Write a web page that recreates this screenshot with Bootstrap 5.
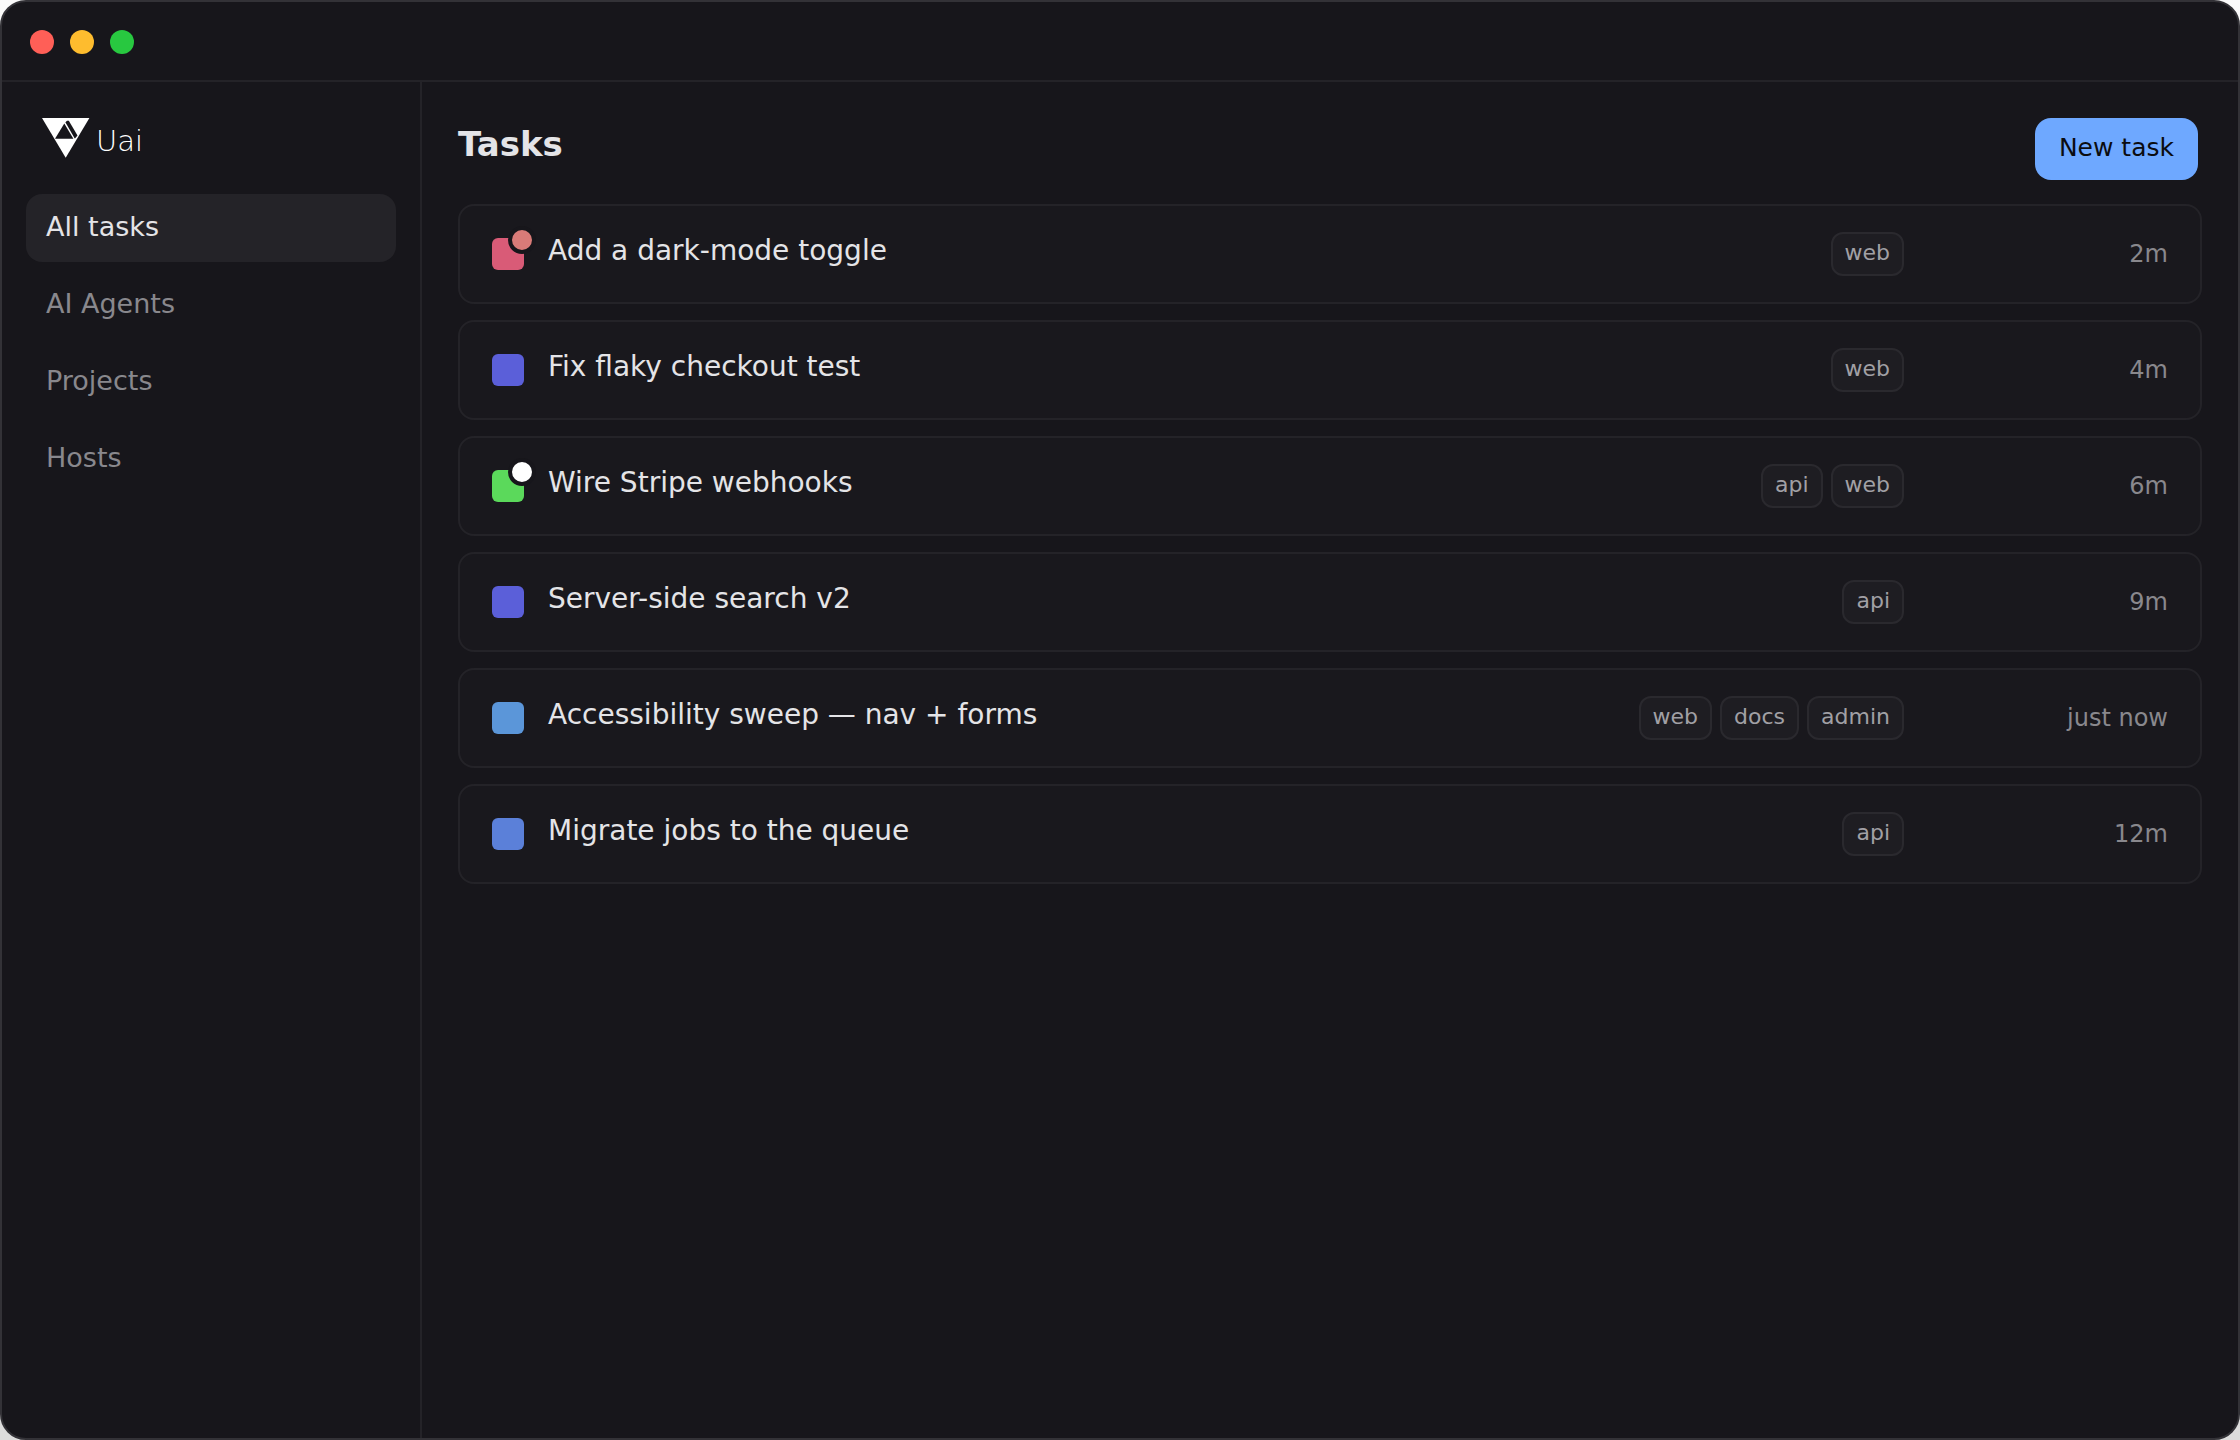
<!DOCTYPE html>
<html lang="en" data-bs-theme="dark">
<head>
<meta charset="utf-8">
<meta name="viewport" content="width=device-width, initial-scale=1">
<title>Uai – Tasks</title>
<link href="https://cdn.jsdelivr.net/npm/bootstrap@5.3.0/dist/css/bootstrap.min.css" rel="stylesheet">
<style>
  :root {
    --surface: #17161b;
    --raised: #19181d;
    --line: #242328;
    --ink: #e4e4e7;
    --muted: #89888d;
  }
  body {
    font-family: "DejaVu Sans", sans-serif;
    color: var(--ink);
    background: linear-gradient(#fafafa, #dcdcdc);
  }
  .app-window { background: var(--surface); border: 2px solid #333237; border-radius: 26px; }
  .title-bar { padding: 28px 28px 26px; gap: 16px; border-bottom: 2px solid var(--line); }
  .light { width: 24px; height: 24px; border-radius: 50%; }
  .light-close { background: #ff5f57; }
  .light-min { background: #febc2e; }
  .light-max { background: #28c840; }

  .side { width: 420px; padding: 36px 24px; border-right: 2px solid var(--line); }
  .brand { padding-left: 16px; gap: 6px; height: 40px; margin-bottom: 36px; color: #fff; }
  .brand-name { font: 200 29px/28px "DejaVu Sans", "DejaVu Sans Light", sans-serif; padding-top: 6px; }
  .side-nav { gap: 9px; }
  .side-nav .nav-link { color: var(--muted); font-size: 27px; line-height: 32px; padding: 17px 20px 19px; border-radius: 16px; }
  .side-nav .nav-link.active { color: var(--ink); background: var(--line); }

  .content { padding: 36px; }
  .content-head { padding-right: 4px; margin-bottom: 24px; }
  .content-head h1 { font-size: 34px; line-height: 40px; color: var(--ink); }
  .btn-new { --bs-btn-bg: #6ea8ff; --bs-btn-color: #0b0c10; --bs-btn-hover-bg: #86b6ff; --bs-btn-hover-color: #0b0c10;
    font-size: 25px; line-height: 32px; padding: 14px 24px 16px; border: 0; border-radius: 16px; }

  .task-list { gap: 16px; }
  .task { min-height: 100px; padding: 0 32px; gap: 24px; background: var(--raised); border: 2px solid var(--line); border-radius: 16px; }
  .swatch { width: 32px; height: 32px; border-radius: 6px; }
  .swatch-rose { background: #d95b77; }
  .swatch-indigo { background: #5b5fd9; }
  .swatch-green { background: #5bd95b; }
  .swatch-sky { background: #5b96d9; }
  .swatch-blue { background: #5b80d9; }
  .dot { position: absolute; top: -12px; right: -12px; width: 28px; height: 28px; border: 4px solid var(--surface); border-radius: 50%; background: #fff; }
  .dot-alert { background: #d97b78; }
  .task-name { font-size: 28px; line-height: 32px; padding-bottom: 6px; }
  .tag { font-size: 22px; line-height: 28px; padding: 5px 12px 7px; color: #a1a0a5; background: #1e1d22; border: 2px solid #2a292e; border-radius: 12px; }
  .age { width: 240px; font-size: 24px; line-height: 32px; color: var(--muted); }
</style>
</head>
<body>
<div class="app-window min-vh-100 d-flex flex-column overflow-hidden">
  <header class="title-bar d-flex">
    <span class="light light-close"></span>
    <span class="light light-min"></span>
    <span class="light light-max"></span>
  </header>
  <div class="d-flex flex-grow-1">
    <aside class="side flex-shrink-0">
      <div class="brand d-flex align-items-center">
        <svg width="48" height="40" viewBox="0 0 48 40" aria-hidden="true">
          <path fill="#fff" d="M0 0H47.4L23.7 39.7Z"/>
          <path fill="#17161b" d="M13 20.8 22.3 5.4 31.4 20.8Z"/>
          <path fill="#17161b" d="M23.4 4.2 25 2.7H26.8L35.5 17.6 33.2 20.2H32.6Z"/>
        </svg>
        <span class="brand-name">Uai</span>
      </div>
      <nav class="side-nav nav flex-column">
        <a class="nav-link active" aria-current="page" href="#">All tasks</a>
        <a class="nav-link" href="#">AI Agents</a>
        <a class="nav-link" href="#">Projects</a>
        <a class="nav-link" href="#">Hosts</a>
      </nav>
    </aside>
    <main class="content flex-grow-1">
      <div class="content-head d-flex justify-content-between align-items-baseline">
        <h1 class="fw-bold mb-0">Tasks</h1>
        <button type="button" class="btn btn-new">New task</button>
      </div>
      <ul class="task-list list-unstyled d-flex flex-column mb-0">
        <li class="task d-flex align-items-center">
          <span class="swatch swatch-rose position-relative"><span class="dot dot-alert"></span></span>
          <span class="task-name flex-grow-1">Add a dark-mode toggle</span>
          <span class="d-flex gap-2"><span class="tag">web</span></span>
          <span class="age text-end">2m</span>
        </li>
        <li class="task d-flex align-items-center">
          <span class="swatch swatch-indigo"></span>
          <span class="task-name flex-grow-1">Fix flaky checkout test</span>
          <span class="d-flex gap-2"><span class="tag">web</span></span>
          <span class="age text-end">4m</span>
        </li>
        <li class="task d-flex align-items-center">
          <span class="swatch swatch-green position-relative"><span class="dot"></span></span>
          <span class="task-name flex-grow-1">Wire Stripe webhooks</span>
          <span class="d-flex gap-2"><span class="tag">api</span><span class="tag">web</span></span>
          <span class="age text-end">6m</span>
        </li>
        <li class="task d-flex align-items-center">
          <span class="swatch swatch-indigo"></span>
          <span class="task-name flex-grow-1">Server-side search v2</span>
          <span class="d-flex gap-2"><span class="tag">api</span></span>
          <span class="age text-end">9m</span>
        </li>
        <li class="task d-flex align-items-center">
          <span class="swatch swatch-sky"></span>
          <span class="task-name flex-grow-1">Accessibility sweep — nav + forms</span>
          <span class="d-flex gap-2"><span class="tag">web</span><span class="tag">docs</span><span class="tag">admin</span></span>
          <span class="age text-end">just now</span>
        </li>
        <li class="task d-flex align-items-center">
          <span class="swatch swatch-blue"></span>
          <span class="task-name flex-grow-1">Migrate jobs to the queue</span>
          <span class="d-flex gap-2"><span class="tag">api</span></span>
          <span class="age text-end">12m</span>
        </li>
      </ul>
    </main>
  </div>
</div>
<script src="https://cdn.jsdelivr.net/npm/bootstrap@5.3.0/dist/js/bootstrap.bundle.min.js"></script>
</body>
</html>
